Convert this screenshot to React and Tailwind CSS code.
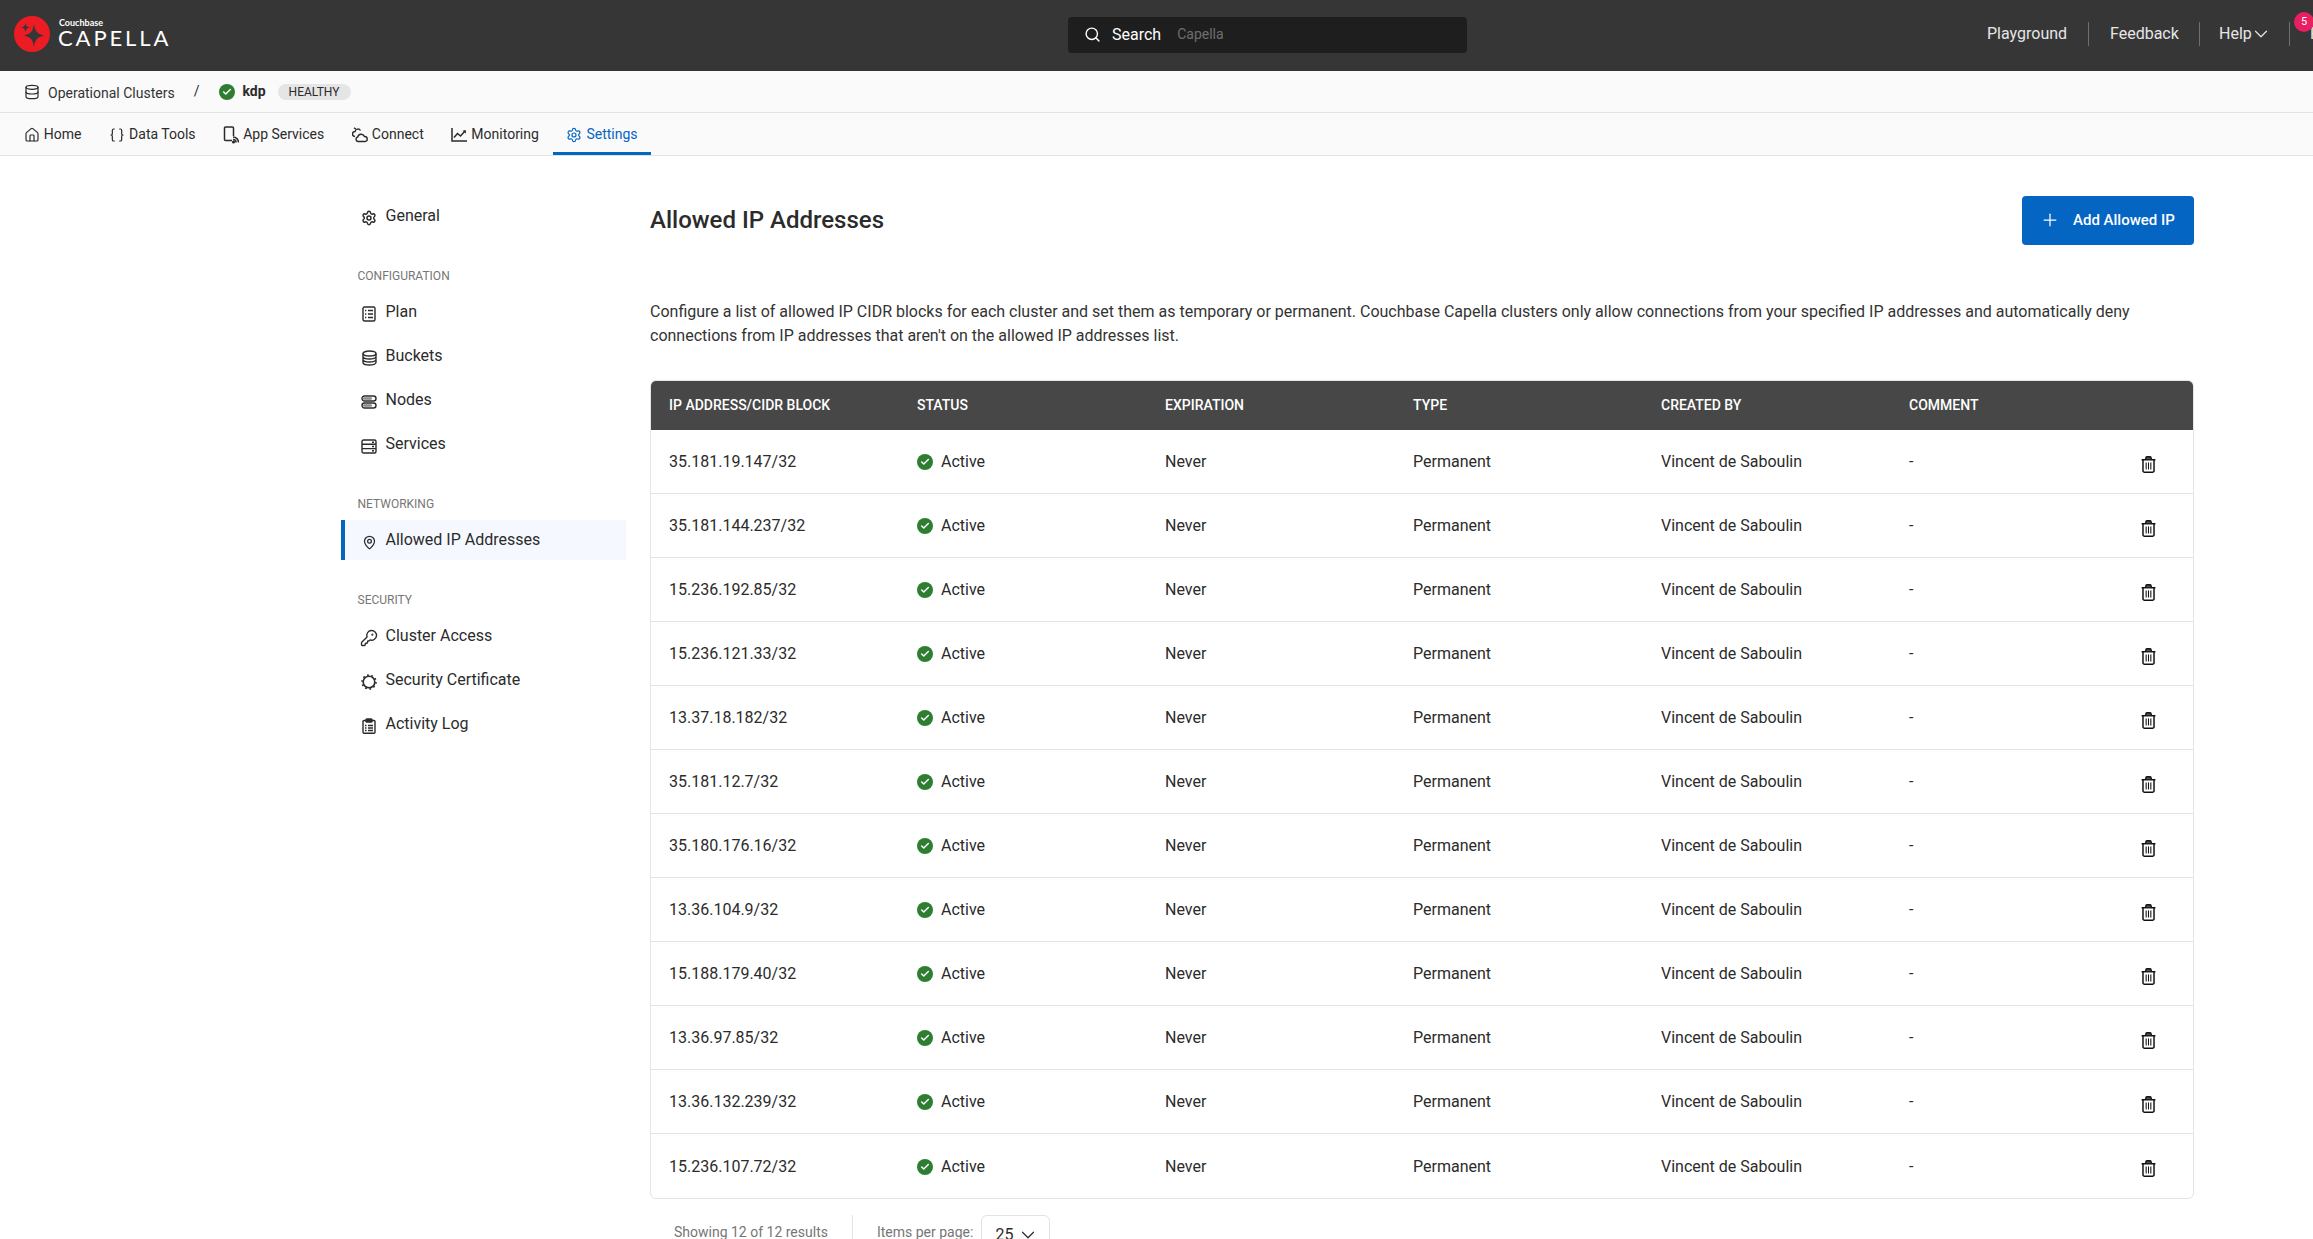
import { Home, Braces, Settings, Search, ChevronDown, Plus, Database, Check, MapPin, KeyRound } from "lucide-react";

const rows = [
  "35.181.19.147/32",
  "35.181.144.237/32",
  "15.236.192.85/32",
  "15.236.121.33/32",
  "13.37.18.182/32",
  "35.181.12.7/32",
  "35.180.176.16/32",
  "13.36.104.9/32",
  "15.188.179.40/32",
  "13.36.97.85/32",
  "13.36.132.239/32",
  "15.236.107.72/32",
];

function Logo() {
  return (
    <div className="flex items-center mt-[-3px]">
      <svg width="36" height="36" viewBox="0 0 36 36" className="ml-[14px] shrink-0">
        <circle cx="18" cy="18" r="18" fill="#ed1c24" />
        <path d="M20 8 C21 15 23 18 30 19.500 C23 21 21 24 20 31 C19 24 17 21 10 19.500 C17 18 19 15 20 8Z" fill="#363636" />
        <path d="M11.500 7 C12 10 13 11 16 11.500 C13 12 12 13 11.500 16 C11 13 10 12 7 11.500 C10 11 11 10 11.500 7Z" fill="#363636" />
      </svg>
      <div className="ml-[8px] mt-[-4px] flex flex-col text-white">
        <span className="ml-[1px] text-[9px] leading-[10px] font-bold font-['Lato',sans-serif]">Couchbase</span>
        <span className="text-[22px] leading-[19px] font-normal tracking-[2.9px] font-['Lato',sans-serif]">CAPELLA</span>
      </div>
    </div>
  );
}

function AppIcon() {
  return (
    <svg width="16" height="18" viewBox="0 0 16 18" fill="none" stroke="currentColor" strokeWidth="1.500">
      <path d="M9 14.500H2.500a1 1 0 0 1-1-1V2a1 1 0 0 1 1-1h7a1 1 0 0 1 1 1v8" />
      <path d="M10 13.500a3 3 0 0 1 3 3M10 11a5.500 5.500 0 0 1 5.500 5.500" />
      <circle cx="10.500" cy="16" r="0.800" fill="currentColor" />
    </svg>
  );
}

function ConnectIcon() {
  return (
    <svg width="16" height="16" viewBox="0 0 16 16" fill="none" stroke="currentColor" strokeWidth="1.400">
      <path d="M3 9.500A2.500 2.500 0 0 1 3 4.500a3 3 0 0 1 5.500-1" />
      <path d="M6 14.500a2.300 2.300 0 0 1-.3-4.500a3.500 3.500 0 0 1 6.700-.5a2.500 2.500 0 0 1 .6 5z" />
      <path d="M4 2 2 .8" />
    </svg>
  );
}

function MonitorIcon() {
  return (
    <svg width="16" height="15" viewBox="0 0 16 15" fill="none" stroke="currentColor" strokeWidth="1.500">
      <path d="M1 1v13h15" />
      <path d="M3 10.500 6.500 6.500 9.500 9l5-5.500" />
      <path d="M11.500 3.500h3.300v3.300" fill="currentColor" stroke="none" />
    </svg>
  );
}

function PlanIcon() {
  return (
    <svg width="14" height="16" viewBox="0 0 14 16" fill="none" stroke="currentColor" strokeWidth="1.400">
      <rect x="1" y="1" width="12" height="14" rx="1.500" />
      <path d="M6 4.500h5M6 8h5M6 11.500h5M3 4.500h1.300M3 8h1.300M3 11.500h1.300" />
    </svg>
  );
}

function BucketIcon() {
  return (
    <svg width="15" height="16" viewBox="0 0 15 16" fill="none" stroke="currentColor" strokeWidth="1.400">
      <ellipse cx="7.500" cy="3.500" rx="6.500" ry="2.500" />
      <path d="M1 3.500v9c0 1.400 2.900 2.500 6.500 2.500s6.500-1.100 6.500-2.500v-9M1 6.500c0 1.400 2.900 2.500 6.500 2.500s6.500-1.100 6.500-2.500M1 9.500c0 1.400 2.900 2.500 6.500 2.500s6.500-1.100 6.500-2.500" />
    </svg>
  );
}

function NodeIcon() {
  return (
    <svg width="16" height="14" viewBox="0 0 16 14" fill="none" stroke="currentColor" strokeWidth="1.400">
      <rect x="1" y="1" width="14" height="5" rx="2.500" />
      <rect x="1" y="8" width="14" height="5" rx="2.500" />
      <rect x="2" y="2.200" width="9" height="2.600" rx="1.300" fill="#8a8a8a" stroke="none" />
      <rect x="2" y="9.200" width="9" height="2.600" rx="1.300" fill="#8a8a8a" stroke="none" />
    </svg>
  );
}

function ServiceIcon() {
  return (
    <svg width="16" height="15" viewBox="0 0 16 15" fill="none" stroke="currentColor" strokeWidth="1.400">
      <rect x="1" y="1" width="14" height="13" rx="1.500" />
      <path d="M1 5.300h14M1 9.600h14M11 3.200h2M11 7.500h2M11 11.800h2" />
    </svg>
  );
}

function CertIcon() {
  return (
    <svg width="16" height="16" viewBox="0 0 16 16" fill="none" stroke="currentColor" strokeWidth="1.600">
      <circle cx="8" cy="8" r="5.800" />
      <circle cx="8" cy="8" r="7" strokeWidth="1.500" strokeDasharray="1.800 2.600" />
    </svg>
  );
}

function LogIcon() {
  return (
    <svg width="14" height="16" viewBox="0 0 14 16" fill="none" stroke="currentColor" strokeWidth="1.400">
      <rect x="1" y="2.500" width="12" height="12.800" rx="1" />
      <rect x="4" y="1" width="6" height="3" rx="0.800" fill="currentColor" />
      <path d="M6 7.500h5M6 10h5M6 12.500h5M3 7.500h1.500M3 10h1.500M3 12.500h1.500" />
    </svg>
  );
}

function TrashIcon() {
  return (
    <svg width="15" height="17" viewBox="0 0 14 16" fill="none" stroke="#111" strokeWidth="1.400">
      <path d="M.5 3.500h13" />
      <path d="M4.500 3V2a1.200 1.200 0 0 1 1.200-1.200h2.600A1.200 1.200 0 0 1 9.500 2v1" fill="#555" />
      <path d="M1.800 3.500v10.300A1.500 1.500 0 0 0 3.300 15.300h7.400a1.500 1.500 0 0 0 1.500-1.500V3.500" />
      <path d="M4.800 6v6.800M7 6v6.800M9.200 6v6.800" strokeWidth="1" />
    </svg>
  );
}

function StatusDot() {
  return (
    <span className="w-4 h-4 rounded-full bg-[#2e7d32] flex items-center justify-center shrink-0">
      <Check size={10} strokeWidth={3.500} className="text-white" />
    </span>
  );
}

function TabItem({ icon, label, active, first }) {
  return (
    <div className={`h-full flex items-center gap-[4px] px-[13.8px] border-b-[3px] pt-[4px] ${first ? "ml-[10px]" : ""} ${active ? "border-[#0565c3] text-[#0565c3]" : "border-transparent text-[#2b2b2b]"}`}>
      {icon}
      <span className="text-[14px]">{label}</span>
    </div>
  );
}

function SideItem({ icon, label, active }) {
  return (
    <div className={active ? "h-[40px] flex items-center border-l-4 border-[#0565c3] bg-[#f5f9ff]" : "h-[44px] flex items-center border-l-4 border-transparent"}>
      <span className="w-[16px] ml-[16px] mt-[4px] flex justify-center shrink-0">{icon}</span>
      <span className="ml-[8.500px] text-[16px] leading-[24px] text-[#2b2b2b]">{label}</span>
    </div>
  );
}

function SideLabel({ children }) {
  return <div className="ml-[16.500px] h-[16px] text-[12px] leading-[16px] text-[#767676] uppercase">{children}</div>;
}

function Divider() {
  return <span className="block shrink-0 w-px h-[24px] bg-[#6f6f6f]" />;
}

export default function App() {
  return (
    <div className="h-screen overflow-hidden bg-white font-['Roboto',sans-serif] text-[#2b2b2b]">
      <header className="h-[71px] bg-[#363636] flex items-center overflow-hidden">
        <div className="w-[1068px] shrink-0"><Logo /></div>
        <div className="w-[399px] h-[36px] mt-[-2px] shrink-0 bg-[#1e1e1e] rounded flex items-center pl-[16px]">
          <Search size={17} className="text-white" />
          <span className="ml-[11px] text-[16px] text-white">Search</span>
          <span className="ml-[16px] text-[14px] text-[#6e6e6e]">Capella</span>
        </div>
        <nav className="ml-[520px] mt-[-3px] shrink-0 flex items-center text-[16px] text-[#e6e6e6]">
          <span className="w-[81px] whitespace-nowrap">Playground</span>
          <div className="ml-[20px]"><Divider /></div>
          <span className="ml-[21px] w-[68px]">Feedback</span>
          <div className="ml-[21px]"><Divider /></div>
          <span className="ml-[19px] flex items-center w-[49px]">Help<ChevronDown size={22} strokeWidth={1.300} className="ml-[-1.500px] shrink-0" /></span>
          <div className="ml-[21px]"><Divider /></div>
          <span className="ml-[20px] relative">
            Profile
            <span className="absolute left-[-16px] top-[-10px] w-[20px] h-[20px] rounded-full bg-[#e91e63] text-white text-[11px] flex items-center justify-center">5</span>
          </span>
        </nav>
      </header>

      <div className="h-[42px] bg-[#fafafa] border-b border-[#e3e3e3] flex items-center text-[14px]">
        <Database size={16} strokeWidth={1.800} className="ml-[24px]" />
        <span className="ml-[8px] mt-[4px] text-[#333]">Operational Clusters</span>
        <span className="ml-[19px]">/</span>
        <span className="ml-[20px]"><StatusDot /></span>
        <span className="ml-[7px] font-bold">kdp</span>
        <span className="ml-[12px] h-[16px] w-[73px] rounded-full bg-[#e5e5e5] text-[12px] leading-[16px] text-center">HEALTHY</span>
      </div>

      <div className="h-[43px] bg-[#fafafa] border-b border-[#e3e3e3] flex items-center">
        <TabItem first icon={<Home size={16} strokeWidth={1.800} />} label="Home" />
        <TabItem icon={<Braces size={16} strokeWidth={1.800} />} label="Data Tools" />
        <TabItem icon={<AppIcon />} label="App Services" />
        <TabItem icon={<ConnectIcon />} label="Connect" />
        <TabItem icon={<MonitorIcon />} label="Monitoring" />
        <TabItem active icon={<Settings size={16} strokeWidth={1.800} />} label="Settings" />
      </div>

      <div className="flex">
        <aside className="ml-[341px] w-[285px] shrink-0 pt-[38px]">
          <SideItem icon={<Settings size={16} strokeWidth={2.200} />} label="General" />
          <div className="mt-[30px]"><SideLabel>Configuration</SideLabel></div>
          <div className="mt-[6px]">
            <SideItem icon={<PlanIcon />} label="Plan" />
            <SideItem icon={<BucketIcon />} label="Buckets" />
            <SideItem icon={<NodeIcon />} label="Nodes" />
            <SideItem icon={<ServiceIcon />} label="Services" />
          </div>
          <div className="mt-[30px]"><SideLabel>Networking</SideLabel></div>
          <div className="mt-[8px]">
            <SideItem active icon={<MapPin size={15} strokeWidth={2} />} label="Allowed IP Addresses" />
          </div>
          <div className="mt-[32px]"><SideLabel>Security</SideLabel></div>
          <div className="mt-[6px]">
            <SideItem icon={<KeyRound size={18} strokeWidth={1.800} className="shrink-0" />} label="Cluster Access" />
            <SideItem icon={<CertIcon />} label="Security Certificate" />
            <SideItem icon={<LogIcon />} label="Activity Log" />
          </div>
        </aside>

        <main className="ml-[24px] w-[1544px] shrink-0 pt-[39px]">
          <div className="h-[50px] flex items-center justify-between">
            <h1 className="text-[24px] font-medium leading-[32px]">Allowed IP Addresses</h1>
            <button className="w-[172px] h-[49px] bg-[#0565c3] rounded text-white text-[15px] font-medium flex items-center pl-[18px]">
              <Plus size={20} strokeWidth={1.500} />
              <span className="ml-[13px]">Add Allowed IP</span>
            </button>
          </div>
          <p className="mt-[55px] text-[16px] leading-[24px] text-[#333]">
            Configure a list of allowed IP CIDR blocks for each cluster and set them as temporary or permanent. Couchbase Capella clusters only allow connections from your specified IP addresses and automatically deny connections from IP addresses that aren't on the allowed IP addresses list.
          </p>

          <div className="mt-[32px] border border-[#e3e3e8] rounded-md overflow-hidden">
            <div className="h-[49px] pb-[1px] bg-[#474747] text-white text-[14px] font-medium grid grid-cols-[repeat(6,248px)_1fr] pl-[18px] items-center">
              <span>IP ADDRESS/CIDR BLOCK</span>
              <span>STATUS</span>
              <span>EXPIRATION</span>
              <span>TYPE</span>
              <span>CREATED BY</span>
              <span>COMMENT</span>
            </div>
            {rows.map((ip, i) => (
              <div key={ip} className={`h-[64px] pt-[1px] text-[16px] grid grid-cols-[repeat(6,248px)_1fr] pl-[18px] items-center ${i === rows.length - 1 ? "" : "border-b border-[#e3e3e8]"}`}>
                <span>{ip}</span>
                <span className="flex items-center gap-[8px]"><StatusDot />Active</span>
                <span>Never</span>
                <span>Permanent</span>
                <span>Vincent de Saboulin</span>
                <span>-</span>
                <span className="mt-[4px] ml-[-16px] flex"><TrashIcon /></span>
              </div>
            ))}
          </div>

          <div className="mt-[16px] h-[40px] flex items-start text-[14px] text-[#767676]">
            <span className="ml-[24px] mt-[7px]">Showing 12 of 12 results</span>
            <span className="ml-[24px] w-px h-[40px] bg-[#e3e3e3]" />
            <span className="ml-[24px] mt-[7px]">Items per page:</span>
            <span className="ml-[8px] w-[69px] h-[40px] border border-[#e3e3e3] rounded-md flex items-center pl-[13px] text-[16px] text-[#2b2b2b]">
              25<ChevronDown size={22} strokeWidth={1.300} className="ml-[4px]" />
            </span>
          </div>
        </main>
      </div>
    </div>
  );
}
